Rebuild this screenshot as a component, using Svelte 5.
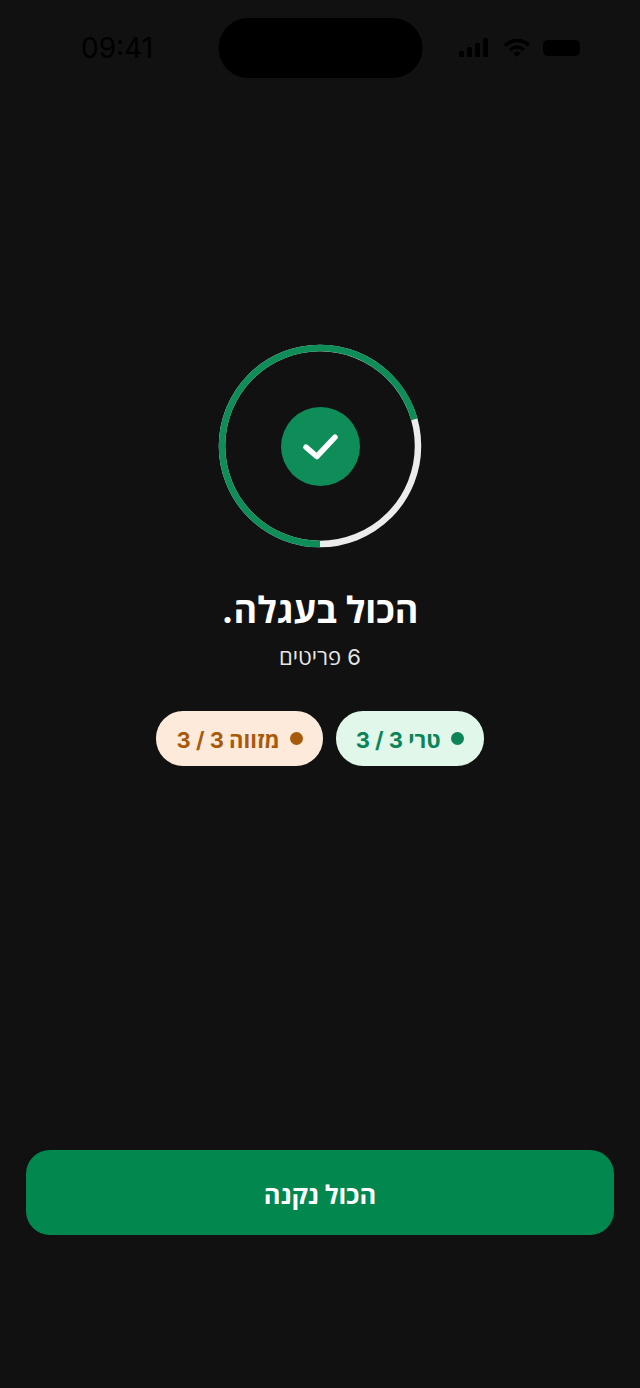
<script>
  const r = 98;
  const circ = 2 * Math.PI * r;
  const fresh = { label: "טרי", done: 3, total: 3 };
  const cooked = { label: "מזווה", done: 3, total: 3 };
  const doneShare = 0.705;
</script>

<main class="screen" dir="rtl">
  <header class="status" dir="ltr">
    <span class="time">09:41</span>
    <div class="island"></div>
    <div class="indicators">
      <svg width="32" height="20" viewBox="0 0 32 20" fill="#000">
        <rect x="0" y="13" width="5" height="6" rx="1.500" />
        <rect x="8" y="9" width="5" height="10" rx="1.500" />
        <rect x="16" y="5" width="5" height="14" rx="1.500" />
        <rect x="24" y="0" width="5" height="19" rx="1.500" />
      </svg>
      <svg width="28" height="20" viewBox="0 0 28 20" fill="none" stroke="#000" stroke-width="3.400">
        <path d="M2 7.500 A17 17 0 0 1 26 7.500" />
        <path d="M7 12 A10 10 0 0 1 21 12" />
        <path d="M14 19 L10.500 15.200 A5 5 0 0 1 17.500 15.200 Z" fill="#000" stroke="none" />
      </svg>
      <div class="battery"></div>
    </div>
  </header>

  <section class="hero">
    <div class="ring">
      <svg width="204" height="204" viewBox="0 0 204 204">
        <circle cx="102" cy="102" r={r} fill="none" stroke="#ececec" stroke-width="6.500" />
        <circle
          cx="102" cy="102" r={r} fill="none" stroke="#0f8d59" stroke-width="6.500"
          stroke-dasharray="{circ * doneShare} {circ}"
          transform="rotate(90 102 102)"
        />
      </svg>
      <div class="badge">
        <svg width="36" height="30" viewBox="0 0 36 30" fill="none" stroke="#fff" stroke-width="5.500" stroke-linecap="round" stroke-linejoin="round">
          <path d="M3 15.200 L13.800 24.500 L32 5.200" />
        </svg>
      </div>
    </div>
    <h1>הכול בעגלה.</h1>
    <p class="count">6 פריטים</p>
    <div class="pills">
      <div class="pill pill--fresh"><span class="dot"></span><span>{fresh.label} {fresh.done} / {fresh.total}</span></div>
      <div class="pill pill--pantry"><span class="dot"></span><span>{cooked.label} {cooked.done} / {cooked.total}</span></div>
    </div>
  </section>

  <button class="cta">הכול נקנה</button>
</main>

<style>
  :global(body) {
    background: #111111;
  }

  .screen {
    width: 640px;
    height: 1388px;
    background: #111111;
    display: flex;
    flex-direction: column;
    align-items: center;
    font-family: "Inter", "Open Sans", "Liberation Sans", sans-serif;
    overflow: hidden;
  }

  .status {
    width: 100%;
    box-sizing: border-box;
    height: 78px;
    padding: 18px 60px 0 81px;
    display: grid;
    grid-template-columns: 1fr 204px 1fr;
  }

  .time {
    font-size: 28px;
    line-height: 60px;
    color: #000;
  }

  .island {
    width: 204px;
    height: 60px;
    border-radius: 30px;
    background: #000;
    transform: translateX(-10.500px);
  }

  .indicators {
    display: flex;
    align-items: center;
    justify-content: flex-end;
    gap: 12px;
    height: 60px;
  }

  .battery {
    width: 37px;
    height: 16px;
    border-radius: 5px;
    background: #000;
  }

  .hero {
    margin-top: 266px;
    display: flex;
    flex-direction: column;
    align-items: center;
  }

  .ring {
    width: 204px;
    height: 204px;
    position: relative;
  }

  .ring > svg {
    display: block;
  }

  .badge {
    position: absolute;
    left: 63px;
    top: 63px;
    width: 79px;
    height: 79px;
    border-radius: 50%;
    background: #0f8d59;
    display: flex;
    align-items: center;
    justify-content: center;
  }

  h1 {
    margin: 39px 0 0;
    font-size: 36px;
    line-height: 46px;
    font-weight: 700;
    color: #fff;
  }

  .count {
    margin: 9px 0 0;
    font-size: 22px;
    line-height: 30px;
    color: #e6e6e6;
  }

  .pills {
    margin-top: 39px;
    display: flex;
    gap: 13px;
  }

  .pill {
    height: 55px;
    padding: 0 20px;
    border-radius: 27px;
    display: flex;
    align-items: center;
    gap: 10px;
    font-size: 22px;
    font-weight: 700;
  }

  .dot {
    width: 13px;
    height: 13px;
    border-radius: 50%;
  }

  .pill--fresh {
    background: #e0f7ea;
    color: #0b8457;
  }

  .pill--fresh .dot {
    background: #0b8457;
  }

  .pill--pantry {
    background: #fdeadb;
    color: #a85a0c;
  }

  .pill--pantry .dot {
    background: #a85a0c;
  }

  .cta {
    margin-top: auto;
    margin-bottom: 153px;
    width: 588px;
    height: 85px;
    padding: 2px 0 0;
    border: 0;
    border-radius: 24px;
    background: #02884f;
    color: #fff;
    font-family: inherit;
    font-size: 25.500px;
    font-weight: 700;
  }
</style>
